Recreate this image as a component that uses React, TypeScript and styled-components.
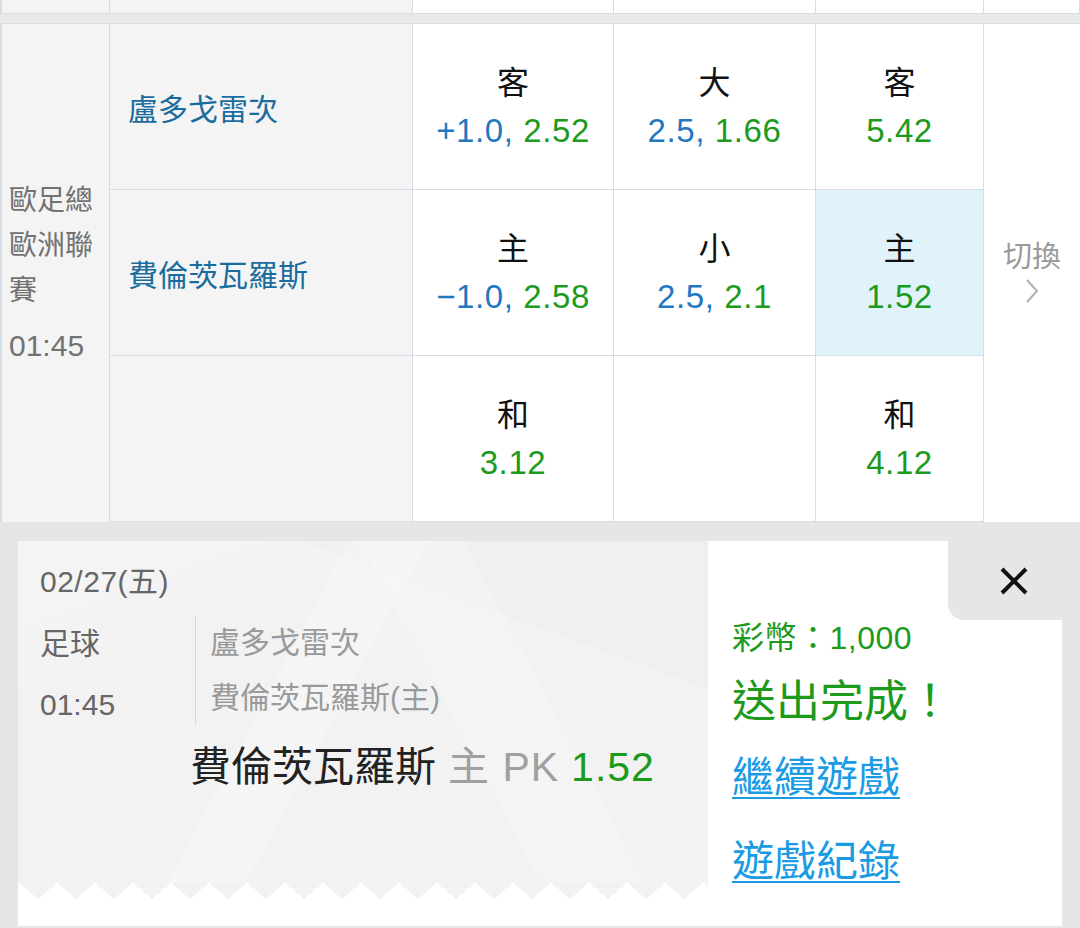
import React from 'react';
import styled, { createGlobalStyle } from 'styled-components';

const GlobalStyle = createGlobalStyle`
  html, body {
    margin: 0;
    padding: 0;
    overflow: hidden;
    background: #ffffff;
  }
  body {
    font-family: "Liberation Sans", "Noto Sans CJK TC", sans-serif;
  }
  * {
    box-sizing: border-box;
  }
`;

const LINE = '#d5dee6';
const GREEN = '#1c9a1c';
const BLUE = '#1f78c0';

const COLS = '108px 303px 201px 202px 168px 1fr';

const Page = styled.div`
  width: 1080px;
  height: 928px;
  display: flex;
  flex-direction: column;
  background: #e6e6e6;
`;

const StubRow = styled.div`
  display: grid;
  grid-template-columns: ${COLS};
  height: 13px;
  border-left: 2px solid ${LINE};
`;

const StubCell = styled.div<{ $shade?: boolean }>`
  background: ${(p) => (p.$shade ? '#f4f4f4' : '#ffffff')};
  border-right: 1px solid ${LINE};
`;

const Divider = styled.div`
  height: 11px;
  background: #e9e9e9;
  border-top: 1px solid #dadde0;
  border-bottom: 1px solid #dadde0;
`;

const Board = styled.div`
  display: grid;
  grid-template-columns: ${COLS};
  grid-template-rows: repeat(3, 166px);
  border-left: 2px solid ${LINE};
  background: #ffffff;
`;

const LeagueCell = styled.div`
  grid-row: 1 / span 3;
  background: #f4f4f4;
  border-right: 1px solid ${LINE};
  display: flex;
  flex-direction: column;
  justify-content: center;
  padding: 0 4px 0 7px;
  color: #727272;
`;

const LeagueName = styled.div`
  font-size: 28px;
  line-height: 45px;
`;

const LeagueTime = styled.div`
  font-size: 30px;
  line-height: 45px;
  margin-top: 10px;
`;

const TeamCell = styled.div`
  background: #f4f4f4;
  border-right: 1px solid ${LINE};
  border-bottom: 1px solid ${LINE};
  display: flex;
  align-items: center;
  padding: 0 0 0 18px;
  color: #1b6c9e;
  font-size: 30px;
`;

const OddsCell = styled.div<{ $picked?: boolean }>`
  background: ${(p) => (p.$picked ? '#e0f3fb' : '#ffffff')};
  border-right: 1px solid ${LINE};
  border-bottom: 1px solid ${LINE};
  display: flex;
  flex-direction: column;
  align-items: center;
  justify-content: center;
`;

const OddsLabel = styled.div`
  font-size: 32px;
  line-height: 47px;
  color: #111111;
`;

const OddsValue = styled.div`
  font-size: 33px;
  line-height: 47px;
  letter-spacing: 0.6px;
  color: ${GREEN};
`;

const Handicap = styled.span`
  color: ${BLUE};
`;

const SwitchCell = styled.div`
  grid-column: 6;
  grid-row: 1 / span 3;
  display: flex;
  flex-direction: column;
  align-items: center;
  justify-content: center;
  color: #9a9a9a;
  font-size: 29px;
  padding-bottom: 6px;
`;

const SwitchText = styled.div`
  line-height: 42px;
`;

const Sheet = styled.div`
  flex: 1;
  padding: 19px 18px 2px 18px;
`;

const Ticket = styled.div`
  position: relative;
  height: 100%;
  display: flex;
  background: #ffffff;
`;

const Stub = styled.div`
  width: 690px;
  display: flex;
  flex-direction: column;
`;

const StubBody = styled.div`
  height: 342px;
  padding: 18px 0 0 22px;
  background-color: #f2f2f2;
  background-image:
    linear-gradient(118deg, transparent 38%, rgba(255, 255, 255, 0.22) 38%, rgba(255, 255, 255, 0.22) 47%, transparent 47%),
    linear-gradient(62deg, transparent 60%, rgba(255, 255, 255, 0.18) 60%, rgba(255, 255, 255, 0.18) 72%, transparent 72%),
    linear-gradient(160deg, rgba(255, 255, 255, 0.25) 0%, transparent 30%),
    linear-gradient(20deg, transparent 75%, rgba(238, 238, 238, 0.6) 75%);
`;

const Zigzag = styled.div`
  height: 16px;
  background: conic-gradient(from 130deg at 50% 0, #ffffff 0deg 100deg, #f2f2f2 100deg 360deg);
  background-size: 38px 16px;
  background-position: 20px 0;
  background-repeat: repeat-x;
`;

const DateLine = styled.div`
  font-size: 30px;
  line-height: 46px;
  letter-spacing: 0.5px;
  color: #666666;
`;

const MatchBlock = styled.div`
  display: flex;
  margin-top: 10px;
  height: 109px;
`;

const SportCol = styled.div`
  width: 155px;
  display: flex;
  flex-direction: column;
  gap: 17px;
  padding-top: 7px;
  color: #666666;
  font-size: 30px;
  line-height: 44px;
`;

const TeamsCol = styled.div`
  border-left: 1px solid #d6d6d6;
  padding: 6px 0 0 14px;
  display: flex;
  flex-direction: column;
  gap: 11px;
  color: #9a9a9a;
  font-size: 30px;
  line-height: 44px;
`;

const PickLine = styled.div`
  margin: 18px 0 0 150px;
  font-size: 41px;
  line-height: 50px;
  color: #222222;
  white-space: nowrap;
`;

const Muted = styled.span`
  color: #a0a0a0;
  margin: 0 12px;
  letter-spacing: 1px;
`;

const Price = styled.span`
  color: ${GREEN};
  letter-spacing: 1px;
`;

const Result = styled.div`
  flex: 1;
  padding: 74px 0 0 24px;
  display: flex;
  flex-direction: column;
`;

const Coins = styled.div`
  font-size: 32px;
  line-height: 46px;
  letter-spacing: 0.5px;
  color: ${GREEN};
`;

const Done = styled.div`
  font-size: 44px;
  line-height: 58px;
  margin-top: 12px;
  color: ${GREEN};
`;

const Link = styled.a`
  font-size: 42px;
  line-height: 54px;
  color: #1a9be4;
  text-decoration: underline;
  text-underline-offset: 5px;
  text-decoration-thickness: 2px;
  cursor: pointer;
  align-self: flex-start;
`;

const LinkGap = styled.div<{ $h: number }>`
  height: ${(p) => p.$h}px;
`;

const CloseButton = styled.button`
  position: absolute;
  top: 0;
  right: -18px;
  width: 132px;
  height: 79px;
  border: none;
  padding: 0;
  background: #e6e6e6;
  border-bottom-left-radius: 16px;
  display: flex;
  align-items: center;
  justify-content: center;
  cursor: pointer;
`;

type Odds = { label: string; line?: string; price: string };

const OddsBox = ({ odds, picked }: { odds?: Odds; picked?: boolean }) => (
  <OddsCell $picked={picked}>
    {odds && (
      <>
        <OddsLabel>{odds.label}</OddsLabel>
        <OddsValue>
          {odds.line && <Handicap>{odds.line}</Handicap>}
          {odds.price}
        </OddsValue>
      </>
    )}
  </OddsCell>
);

const rows: { team: string; cells: (Odds | undefined)[]; picked?: number }[] = [
  {
    team: '盧多戈雷次',
    cells: [
      { label: '客', line: '+1.0, ', price: '2.52' },
      { label: '大', line: '2.5, ', price: '1.66' },
      { label: '客', price: '5.42' },
    ],
  },
  {
    team: '費倫茨瓦羅斯',
    cells: [
      { label: '主', line: '−1.0, ', price: '2.58' },
      { label: '小', line: '2.5, ', price: '2.1' },
      { label: '主', price: '1.52' },
    ],
    picked: 2,
  },
  {
    team: '',
    cells: [{ label: '和', price: '3.12' }, undefined, { label: '和', price: '4.12' }],
  },
];

export default function App() {
  return (
    <>
      <GlobalStyle />
      <Page>
        <StubRow>
          <StubCell $shade />
          <StubCell $shade />
          <StubCell />
          <StubCell />
          <StubCell />
          <StubCell />
        </StubRow>
        <Divider />
        <Board>
          <LeagueCell>
            <LeagueName>歐足總歐洲聯賽</LeagueName>
            <LeagueTime>01:45</LeagueTime>
          </LeagueCell>
          {rows.map((r, i) => (
            <React.Fragment key={i}>
              <TeamCell style={{ gridRow: i + 1, gridColumn: 2 }}>{r.team}</TeamCell>
              {r.cells.map((c, j) => (
                <OddsBox key={j} odds={c} picked={r.picked === j} />
              ))}
            </React.Fragment>
          ))}
          <SwitchCell>
            <SwitchText>切換</SwitchText>
            <svg width="16" height="26" viewBox="0 0 16 26">
              <polyline points="3,2 13,13 3,24" fill="none" stroke="#b0b0b0" strokeWidth="2" />
            </svg>
          </SwitchCell>
        </Board>
        <Sheet>
          <Ticket>
            <Stub>
              <StubBody>
                <DateLine>02/27(五)</DateLine>
                <MatchBlock>
                  <SportCol>
                    <div>足球</div>
                    <div>01:45</div>
                  </SportCol>
                  <TeamsCol>
                    <div>盧多戈雷次</div>
                    <div>費倫茨瓦羅斯(主)</div>
                  </TeamsCol>
                </MatchBlock>
                <PickLine>
                  費倫茨瓦羅斯<Muted>主 PK</Muted><Price>1.52</Price>
                </PickLine>
              </StubBody>
              <Zigzag />
            </Stub>
            <Result>
              <Coins>彩幣：1,000</Coins>
              <Done>送出完成！</Done>
              <LinkGap $h={20} />
              <Link>繼續遊戲</Link>
              <LinkGap $h={30} />
              <Link>遊戲紀錄</Link>
            </Result>
            <CloseButton aria-label="close">
              <svg width="30" height="30" viewBox="0 0 30 30">
                <line x1="3" y1="3" x2="27" y2="27" stroke="#111" strokeWidth="4" />
                <line x1="27" y1="3" x2="3" y2="27" stroke="#111" strokeWidth="4" />
              </svg>
            </CloseButton>
          </Ticket>
        </Sheet>
      </Page>
    </>
  );
}
